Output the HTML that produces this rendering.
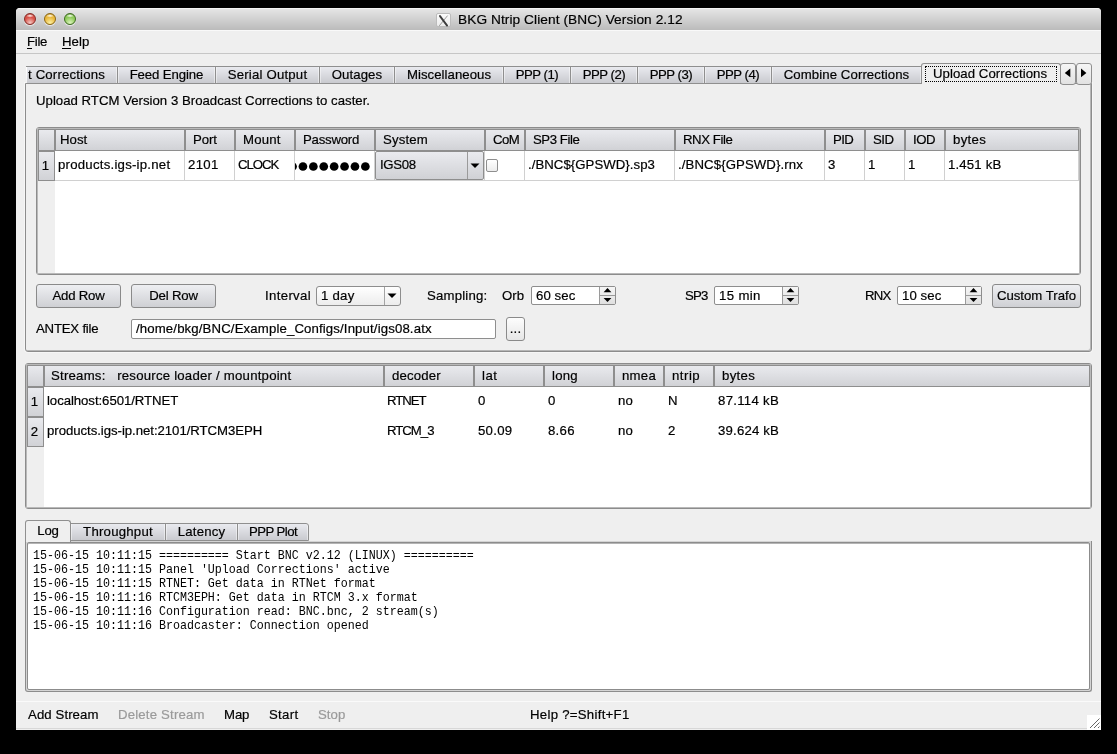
<!DOCTYPE html>
<html><head><meta charset="utf-8"><style>
html,body{margin:0;padding:0;}
body{width:1117px;height:754px;background:#000;position:relative;overflow:hidden;font-family:"Liberation Sans",sans-serif;}
.t{position:absolute;white-space:nowrap;will-change:transform;-webkit-text-stroke:0.2px currentColor;}
</style></head><body>
<div style="position:absolute;left:16px;top:8px;width:1085px;height:722px;background:#efefef;border-radius:4px 4px 0 0;"></div>
<div style="position:absolute;left:16px;top:8px;width:1085px;height:22px;background:linear-gradient(#f3f3f3 0px,#f3f3f3 1px,#e5e5e5 1px,#bbbbbb 100%);border-radius:4px 4px 0 0;"></div>
<div style="position:absolute;left:16px;top:30px;width:1085px;height:1px;background:#f9f9f9;"></div>
<div style="position:absolute;left:24px;top:12.8px;width:12px;height:12px;border-radius:50%;box-sizing:border-box;border:1px solid #862b25;background:radial-gradient(ellipse 38% 18% at 50% 18%,rgba(255,255,255,0.95),rgba(255,255,255,0) 100%),radial-gradient(circle at 50% 88%,#f3c9c3 0%,#d9544a 55%,#d9544a 75%,#862b25 100%);box-shadow:0 1px 1px rgba(255,255,255,0.7);"></div>
<div style="position:absolute;left:44px;top:12.8px;width:12px;height:12px;border-radius:50%;box-sizing:border-box;border:1px solid #8c6712;background:radial-gradient(ellipse 38% 18% at 50% 18%,rgba(255,255,255,0.95),rgba(255,255,255,0) 100%),radial-gradient(circle at 50% 88%,#fbf0a2 0%,#eab93e 55%,#eab93e 75%,#8c6712 100%);box-shadow:0 1px 1px rgba(255,255,255,0.7);"></div>
<div style="position:absolute;left:64px;top:12.8px;width:12px;height:12px;border-radius:50%;box-sizing:border-box;border:1px solid #3d6b1f;background:radial-gradient(ellipse 38% 18% at 50% 18%,rgba(255,255,255,0.95),rgba(255,255,255,0) 100%),radial-gradient(circle at 50% 88%,#dcf3bd 0%,#8fcb5c 55%,#8fcb5c 75%,#3d6b1f 100%);box-shadow:0 1px 1px rgba(255,255,255,0.7);"></div>
<div style="position:absolute;left:436px;top:12.5px;width:15px;height:14.2px;background:linear-gradient(#fbfbfb,#ececec);border:1px solid #bcbcbc;border-radius:2px;box-sizing:border-box;"></div>
<svg style="position:absolute;left:436px;top:12.5px" width="15" height="14" viewBox="0 0 15 14"><path d="M11.6 2.6 L3.2 12.9" stroke="#9c9c9c" stroke-width="1"/><path d="M4 3.1 L11.1 12.6" stroke="#3c3c3c" stroke-width="1.9" stroke-linecap="round"/></svg>
<div class="t" style="left:457.5px;top:12.25px;font-size:13.7px;line-height:16px;color:#000;font-family:'Liberation Sans', sans-serif;letter-spacing:0.07px;">BKG Ntrip Client (BNC) Version 2.12</div>
<div class="t" style="left:27px;top:34.43px;font-size:13.2px;line-height:16px;color:#000;font-family:'Liberation Sans', sans-serif;letter-spacing:-0.297px;">File</div>
<div style="position:absolute;left:27px;top:48px;width:5px;height:1px;background:#000;"></div>
<div class="t" style="left:62px;top:34.43px;font-size:13.2px;line-height:16px;color:#000;font-family:'Liberation Sans', sans-serif;letter-spacing:0.062px;">Help</div>
<div style="position:absolute;left:62px;top:48px;width:9px;height:1px;background:#000;"></div>
<div style="position:absolute;left:16px;top:53px;width:1085px;height:1px;background:#c6c6c6;"></div>
<div style="position:absolute;left:25px;top:83px;width:1067px;height:269px;border:1px solid #8c8c8c;border-radius:0 0 3px 3px;box-sizing:border-box;box-shadow:inset -1px -1px 0 #b6b6b6,0 0 0 1px rgba(255,255,255,0.45);"></div>
<div style="position:absolute;left:26px;top:66px;width:92px;height:18px;background:linear-gradient(#e9eaef,#c9cacf);border:1px solid #8f8f8f;box-sizing:border-box;box-shadow:inset 1px 0 0 rgba(255,255,255,0.45),inset -1px 0 0 rgba(255,255,255,0.45);border-left:none;"></div>
<div class="t" style="left:28px;top:67.43px;font-size:13.2px;line-height:16px;color:#000;font-family:'Liberation Sans', sans-serif;letter-spacing:0.165px;">t Corrections</div>
<div style="position:absolute;left:26px;top:67px;width:1px;height:16px;background:linear-gradient(rgba(255,255,255,0.9),rgba(255,255,255,0.5));"></div>
<div style="position:absolute;left:117px;top:66px;width:99px;height:18px;background:linear-gradient(#e9eaef,#c9cacf);border:1px solid #8f8f8f;box-sizing:border-box;box-shadow:inset 1px 0 0 rgba(255,255,255,0.45),inset -1px 0 0 rgba(255,255,255,0.45);"></div>
<div class="t" style="left:117px;top:67.43px;font-size:13.2px;line-height:16px;color:#000;font-family:'Liberation Sans', sans-serif;width:99px;text-align:center;letter-spacing:-0.104px;">Feed Engine</div>
<div style="position:absolute;left:215px;top:66px;width:105px;height:18px;background:linear-gradient(#e9eaef,#c9cacf);border:1px solid #8f8f8f;box-sizing:border-box;box-shadow:inset 1px 0 0 rgba(255,255,255,0.45),inset -1px 0 0 rgba(255,255,255,0.45);"></div>
<div class="t" style="left:215px;top:67.43px;font-size:13.2px;line-height:16px;color:#000;font-family:'Liberation Sans', sans-serif;width:105px;text-align:center;letter-spacing:0.197px;">Serial Output</div>
<div style="position:absolute;left:319px;top:66px;width:76px;height:18px;background:linear-gradient(#e9eaef,#c9cacf);border:1px solid #8f8f8f;box-sizing:border-box;box-shadow:inset 1px 0 0 rgba(255,255,255,0.45),inset -1px 0 0 rgba(255,255,255,0.45);"></div>
<div class="t" style="left:319px;top:67.43px;font-size:13.2px;line-height:16px;color:#000;font-family:'Liberation Sans', sans-serif;width:76px;text-align:center;letter-spacing:0.083px;">Outages</div>
<div style="position:absolute;left:394px;top:66px;width:110px;height:18px;background:linear-gradient(#e9eaef,#c9cacf);border:1px solid #8f8f8f;box-sizing:border-box;box-shadow:inset 1px 0 0 rgba(255,255,255,0.45),inset -1px 0 0 rgba(255,255,255,0.45);"></div>
<div class="t" style="left:394px;top:67.43px;font-size:13.2px;line-height:16px;color:#000;font-family:'Liberation Sans', sans-serif;width:110px;text-align:center;letter-spacing:0.046px;">Miscellaneous</div>
<div style="position:absolute;left:503px;top:66px;width:68px;height:18px;background:linear-gradient(#e9eaef,#c9cacf);border:1px solid #8f8f8f;box-sizing:border-box;box-shadow:inset 1px 0 0 rgba(255,255,255,0.45),inset -1px 0 0 rgba(255,255,255,0.45);"></div>
<div class="t" style="left:503px;top:67.43px;font-size:13.2px;line-height:16px;color:#000;font-family:'Liberation Sans', sans-serif;width:68px;text-align:center;letter-spacing:-0.484px;">PPP (1)</div>
<div style="position:absolute;left:570px;top:66px;width:68px;height:18px;background:linear-gradient(#e9eaef,#c9cacf);border:1px solid #8f8f8f;box-sizing:border-box;box-shadow:inset 1px 0 0 rgba(255,255,255,0.45),inset -1px 0 0 rgba(255,255,255,0.45);"></div>
<div class="t" style="left:570px;top:67.43px;font-size:13.2px;line-height:16px;color:#000;font-family:'Liberation Sans', sans-serif;width:68px;text-align:center;letter-spacing:-0.484px;">PPP (2)</div>
<div style="position:absolute;left:637px;top:66px;width:68px;height:18px;background:linear-gradient(#e9eaef,#c9cacf);border:1px solid #8f8f8f;box-sizing:border-box;box-shadow:inset 1px 0 0 rgba(255,255,255,0.45),inset -1px 0 0 rgba(255,255,255,0.45);"></div>
<div class="t" style="left:637px;top:67.43px;font-size:13.2px;line-height:16px;color:#000;font-family:'Liberation Sans', sans-serif;width:68px;text-align:center;letter-spacing:-0.484px;">PPP (3)</div>
<div style="position:absolute;left:704px;top:66px;width:68px;height:18px;background:linear-gradient(#e9eaef,#c9cacf);border:1px solid #8f8f8f;box-sizing:border-box;box-shadow:inset 1px 0 0 rgba(255,255,255,0.45),inset -1px 0 0 rgba(255,255,255,0.45);"></div>
<div class="t" style="left:704px;top:67.43px;font-size:13.2px;line-height:16px;color:#000;font-family:'Liberation Sans', sans-serif;width:68px;text-align:center;letter-spacing:-0.484px;">PPP (4)</div>
<div style="position:absolute;left:771px;top:66px;width:151px;height:18px;background:linear-gradient(#e9eaef,#c9cacf);border:1px solid #8f8f8f;box-sizing:border-box;box-shadow:inset 1px 0 0 rgba(255,255,255,0.45),inset -1px 0 0 rgba(255,255,255,0.45);"></div>
<div class="t" style="left:771px;top:67.43px;font-size:13.2px;line-height:16px;color:#000;font-family:'Liberation Sans', sans-serif;width:151px;text-align:center;letter-spacing:0.089px;">Combine Corrections</div>
<div style="position:absolute;left:921px;top:63px;width:140px;height:21px;background:#efefef;border:1px solid #8f8f8f;border-bottom:none;border-radius:3px 3px 0 0;box-sizing:border-box;"></div>
<div style="position:absolute;left:925px;top:66px;width:132px;height:16px;border:1px dotted #000;box-sizing:border-box;"></div>
<div class="t" style="left:920px;top:66.43px;font-size:13.2px;line-height:16px;color:#000;font-family:'Liberation Sans', sans-serif;width:140px;text-align:center;letter-spacing:0.076px;">Upload Corrections</div>
<div style="position:absolute;left:1060px;top:63px;width:16px;height:22px;background:linear-gradient(#f6f6f6,#e2e2e2);border:1px solid #8f8f8f;border-radius:3px;box-sizing:border-box;"></div>
<svg style="position:absolute;left:1060px;top:63px" width="16" height="22" viewBox="0 0 16 22"><path d="M10.3 5.6 L10.3 14.2 L4.8 9.9 Z" fill="#000"/></svg>
<div style="position:absolute;left:1076px;top:63px;width:16px;height:22px;background:linear-gradient(#f6f6f6,#e2e2e2);border:1px solid #8f8f8f;border-radius:3px;box-sizing:border-box;"></div>
<svg style="position:absolute;left:1076px;top:63px" width="16" height="22" viewBox="0 0 16 22"><path d="M5 5.6 L5 14.2 L10.4 9.9 Z" fill="#000"/></svg>
<div class="t" style="left:36px;top:93.43px;font-size:13.2px;line-height:16px;color:#000;font-family:'Liberation Sans', sans-serif;letter-spacing:0.014px;">Upload RTCM Version 3 Broadcast Corrections to caster.</div>
<div style="position:absolute;left:36px;top:127px;width:1045px;height:148px;border:1px solid #8c8c8c;border-radius:3px;box-sizing:border-box;"></div>
<div style="position:absolute;left:37px;top:128px;width:1043px;height:146px;border:1px solid #b9b9b9;box-sizing:border-box;background:#efefef;"></div>
<div style="position:absolute;left:55px;top:151px;width:1024px;height:122px;background:#fff;"></div>
<div style="position:absolute;left:38px;top:129px;width:17px;height:22px;background:linear-gradient(#e9eaee,#d1d2d6);border:1px solid #8e8e8e;box-sizing:border-box;"></div>
<div style="position:absolute;left:55px;top:129px;width:130px;height:22px;background:linear-gradient(#e9eaee,#d1d2d6);border:1px solid #8e8e8e;box-sizing:border-box;"></div>
<div class="t" style="left:59.5px;top:132.43px;font-size:13.2px;line-height:16px;color:#000;font-family:'Liberation Sans', sans-serif;letter-spacing:0.055px;">Host</div>
<div style="position:absolute;left:185px;top:129px;width:50px;height:22px;background:linear-gradient(#e9eaee,#d1d2d6);border:1px solid #8e8e8e;box-sizing:border-box;"></div>
<div class="t" style="left:192.6px;top:132.43px;font-size:13.2px;line-height:16px;color:#000;font-family:'Liberation Sans', sans-serif;letter-spacing:-0.094px;">Port</div>
<div style="position:absolute;left:235px;top:129px;width:60px;height:22px;background:linear-gradient(#e9eaee,#d1d2d6);border:1px solid #8e8e8e;box-sizing:border-box;"></div>
<div class="t" style="left:242.6px;top:132.43px;font-size:13.2px;line-height:16px;color:#000;font-family:'Liberation Sans', sans-serif;letter-spacing:0.200px;">Mount</div>
<div style="position:absolute;left:295px;top:129px;width:80px;height:22px;background:linear-gradient(#e9eaee,#d1d2d6);border:1px solid #8e8e8e;box-sizing:border-box;"></div>
<div class="t" style="left:302.6px;top:132.43px;font-size:13.2px;line-height:16px;color:#000;font-family:'Liberation Sans', sans-serif;letter-spacing:-0.227px;">Password</div>
<div style="position:absolute;left:375px;top:129px;width:110px;height:22px;background:linear-gradient(#e9eaee,#d1d2d6);border:1px solid #8e8e8e;box-sizing:border-box;"></div>
<div class="t" style="left:382.6px;top:132.43px;font-size:13.2px;line-height:16px;color:#000;font-family:'Liberation Sans', sans-serif;letter-spacing:0.135px;">System</div>
<div style="position:absolute;left:485px;top:129px;width:40px;height:22px;background:linear-gradient(#e9eaee,#d1d2d6);border:1px solid #8e8e8e;box-sizing:border-box;"></div>
<div class="t" style="left:492.6px;top:132.43px;font-size:13.2px;line-height:16px;color:#000;font-family:'Liberation Sans', sans-serif;letter-spacing:-0.589px;">CoM</div>
<div style="position:absolute;left:525px;top:129px;width:150px;height:22px;background:linear-gradient(#e9eaee,#d1d2d6);border:1px solid #8e8e8e;box-sizing:border-box;"></div>
<div class="t" style="left:532.6px;top:132.43px;font-size:13.2px;line-height:16px;color:#000;font-family:'Liberation Sans', sans-serif;letter-spacing:-0.432px;">SP3 File</div>
<div style="position:absolute;left:675px;top:129px;width:150px;height:22px;background:linear-gradient(#e9eaee,#d1d2d6);border:1px solid #8e8e8e;box-sizing:border-box;"></div>
<div class="t" style="left:682.6px;top:132.43px;font-size:13.2px;line-height:16px;color:#000;font-family:'Liberation Sans', sans-serif;letter-spacing:-0.418px;">RNX File</div>
<div style="position:absolute;left:825px;top:129px;width:40px;height:22px;background:linear-gradient(#e9eaee,#d1d2d6);border:1px solid #8e8e8e;box-sizing:border-box;"></div>
<div class="t" style="left:832.6px;top:132.43px;font-size:13.2px;line-height:16px;color:#000;font-family:'Liberation Sans', sans-serif;letter-spacing:-0.656px;">PID</div>
<div style="position:absolute;left:865px;top:129px;width:40px;height:22px;background:linear-gradient(#e9eaee,#d1d2d6);border:1px solid #8e8e8e;box-sizing:border-box;"></div>
<div class="t" style="left:872.6px;top:132.43px;font-size:13.2px;line-height:16px;color:#000;font-family:'Liberation Sans', sans-serif;letter-spacing:-0.526px;">SID</div>
<div style="position:absolute;left:905px;top:129px;width:40px;height:22px;background:linear-gradient(#e9eaee,#d1d2d6);border:1px solid #8e8e8e;box-sizing:border-box;"></div>
<div class="t" style="left:912.6px;top:132.43px;font-size:13.2px;line-height:16px;color:#000;font-family:'Liberation Sans', sans-serif;letter-spacing:-0.401px;">IOD</div>
<div style="position:absolute;left:945px;top:129px;width:134px;height:22px;background:linear-gradient(#e9eaee,#d1d2d6);border:1px solid #8e8e8e;box-sizing:border-box;"></div>
<div class="t" style="left:952.6px;top:132.43px;font-size:13.2px;line-height:16px;color:#000;font-family:'Liberation Sans', sans-serif;letter-spacing:0.316px;">bytes</div>
<div style="position:absolute;left:38px;top:151px;width:17px;height:30px;background:linear-gradient(#e9eaee,#d1d2d6);border:1px solid #8e8e8e;box-sizing:border-box;"></div>
<div class="t" style="left:37.3px;top:158.43px;font-size:13.2px;line-height:16px;color:#000;font-family:'Liberation Sans', sans-serif;width:17px;text-align:center;">1</div>
<div style="position:absolute;left:184px;top:151px;width:1px;height:30px;background:#d0d0d0;"></div>
<div style="position:absolute;left:234px;top:151px;width:1px;height:30px;background:#d0d0d0;"></div>
<div style="position:absolute;left:294px;top:151px;width:1px;height:30px;background:#d0d0d0;"></div>
<div style="position:absolute;left:374px;top:151px;width:1px;height:30px;background:#d0d0d0;"></div>
<div style="position:absolute;left:484px;top:151px;width:1px;height:30px;background:#d0d0d0;"></div>
<div style="position:absolute;left:524px;top:151px;width:1px;height:30px;background:#d0d0d0;"></div>
<div style="position:absolute;left:674px;top:151px;width:1px;height:30px;background:#d0d0d0;"></div>
<div style="position:absolute;left:824px;top:151px;width:1px;height:30px;background:#d0d0d0;"></div>
<div style="position:absolute;left:864px;top:151px;width:1px;height:30px;background:#d0d0d0;"></div>
<div style="position:absolute;left:904px;top:151px;width:1px;height:30px;background:#d0d0d0;"></div>
<div style="position:absolute;left:944px;top:151px;width:1px;height:30px;background:#d0d0d0;"></div>
<div style="position:absolute;left:1078px;top:151px;width:1px;height:30px;background:#d0d0d0;"></div>
<div style="position:absolute;left:55px;top:180px;width:1024px;height:1px;background:#d0d0d0;"></div>
<div class="t" style="left:58px;top:157.43px;font-size:13.2px;line-height:16px;color:#000;font-family:'Liberation Sans', sans-serif;letter-spacing:0.239px;">products.igs-ip.net</div>
<div class="t" style="left:188px;top:157.43px;font-size:13.2px;line-height:16px;color:#000;font-family:'Liberation Sans', sans-serif;letter-spacing:0.312px;">2101</div>
<div class="t" style="left:237.5px;top:157.43px;font-size:13.2px;line-height:16px;color:#000;font-family:'Liberation Sans', sans-serif;letter-spacing:-1.019px;">CLOCK</div>
<svg style="position:absolute;left:295px;top:160px" width="79" height="13" viewBox="0 0 79 13"><circle cx="70.35" cy="6.5" r="4.35" fill="#000"/><circle cx="59.95" cy="6.5" r="4.35" fill="#000"/><circle cx="49.55" cy="6.5" r="4.35" fill="#000"/><circle cx="39.15" cy="6.5" r="4.35" fill="#000"/><circle cx="28.75" cy="6.5" r="4.35" fill="#000"/><circle cx="18.35" cy="6.5" r="4.35" fill="#000"/><circle cx="7.95" cy="6.5" r="4.35" fill="#000"/><circle cx="-2.45" cy="6.5" r="4.35" fill="#000"/></svg>
<div style="position:absolute;left:375px;top:151px;width:109px;height:29px;background:linear-gradient(#eaebef,#d0d1d5);border:1px solid #8e8e8e;border-radius:2px;box-sizing:border-box;"></div>
<div style="position:absolute;left:467px;top:152px;width:1px;height:27px;background:#9a9a9a;"></div>
<svg style="position:absolute;left:469px;top:161px" width="12" height="8" viewBox="0 0 12 8"><path d="M1.5 2.5 L10.5 2.5 L6 7 Z" fill="#000"/></svg>
<div class="t" style="left:380px;top:157.43px;font-size:13.2px;line-height:16px;color:#000;font-family:'Liberation Sans', sans-serif;letter-spacing:-0.322px;">IGS08</div>
<div style="position:absolute;left:486px;top:159px;width:12px;height:13px;background:linear-gradient(#ffffff,#ececec);border:1px solid #8e8e8e;border-radius:2px;box-sizing:border-box;"></div>
<div class="t" style="left:528px;top:157.43px;font-size:13.2px;line-height:16px;color:#000;font-family:'Liberation Sans', sans-serif;letter-spacing:0.053px;">./BNC${GPSWD}.sp3</div>
<div class="t" style="left:678px;top:157.43px;font-size:13.2px;line-height:16px;color:#000;font-family:'Liberation Sans', sans-serif;letter-spacing:0.105px;">./BNC${GPSWD}.rnx</div>
<div class="t" style="left:828px;top:157.43px;font-size:13.2px;line-height:16px;color:#000;font-family:'Liberation Sans', sans-serif;">3</div>
<div class="t" style="left:868px;top:157.43px;font-size:13.2px;line-height:16px;color:#000;font-family:'Liberation Sans', sans-serif;">1</div>
<div class="t" style="left:908px;top:157.43px;font-size:13.2px;line-height:16px;color:#000;font-family:'Liberation Sans', sans-serif;">1</div>
<div class="t" style="left:948px;top:157.43px;font-size:13.2px;line-height:16px;color:#000;font-family:'Liberation Sans', sans-serif;letter-spacing:0.170px;">1.451 kB</div>
<div style="position:absolute;left:36px;top:284px;width:85px;height:24px;background:linear-gradient(#eeeff2,#cfd0d4);border:1px solid #8a8a8a;border-radius:3px;box-sizing:border-box;"></div>
<div class="t" style="left:36px;top:288.43px;font-size:13.2px;line-height:16px;color:#000;font-family:'Liberation Sans', sans-serif;width:85px;text-align:center;letter-spacing:-0.210px;">Add Row</div>
<div style="position:absolute;left:131px;top:284px;width:85px;height:24px;background:linear-gradient(#eeeff2,#cfd0d4);border:1px solid #8a8a8a;border-radius:3px;box-sizing:border-box;"></div>
<div class="t" style="left:131px;top:288.43px;font-size:13.2px;line-height:16px;color:#000;font-family:'Liberation Sans', sans-serif;width:85px;text-align:center;letter-spacing:-0.158px;">Del Row</div>
<div class="t" style="left:265px;top:288.43px;font-size:13.2px;line-height:16px;color:#000;font-family:'Liberation Sans', sans-serif;letter-spacing:0.346px;">Interval</div>
<div style="position:absolute;left:316px;top:286px;width:85px;height:20px;background:linear-gradient(#ffffff,#ececec);border:1px solid #8e8e8e;border-radius:3px;box-sizing:border-box;"></div>
<div style="position:absolute;left:384px;top:287px;width:1px;height:18px;background:#a4a4a4;"></div>
<svg style="position:absolute;left:386px;top:291px" width="12" height="8" viewBox="0 0 12 8"><path d="M1.5 2.5 L10.5 2.5 L6 7 Z" fill="#000"/></svg>
<div class="t" style="left:321px;top:288.43px;font-size:13.2px;line-height:16px;color:#000;font-family:'Liberation Sans', sans-serif;letter-spacing:0.263px;">1 day</div>
<div class="t" style="left:427px;top:288.43px;font-size:13.2px;line-height:16px;color:#000;font-family:'Liberation Sans', sans-serif;letter-spacing:0.179px;">Sampling:</div>
<div class="t" style="left:502px;top:288.43px;font-size:13.2px;line-height:16px;color:#000;font-family:'Liberation Sans', sans-serif;letter-spacing:0.016px;">Orb</div>
<div style="position:absolute;left:531px;top:286px;width:85px;height:19px;background:#fff;border:1px solid #8e8e8e;border-radius:2px;box-sizing:border-box;"></div>
<div style="position:absolute;left:599px;top:287px;width:16px;height:17px;background:linear-gradient(#f6f6f6,#e0e0e0);border-left:1px solid #9a9a9a;box-sizing:border-box;"></div>
<div style="position:absolute;left:600px;top:295px;width:15px;height:1px;background:#9a9a9a;"></div>
<svg style="position:absolute;left:600px;top:287px" width="15" height="17" viewBox="0 0 15 17"><path d="M3.6 5.2 L11.4 5.2 L7.5 1 Z" fill="#000"/><path d="M3.6 10.9 L11.4 10.9 L7.5 15 Z" fill="#000"/></svg>
<div class="t" style="left:536px;top:288.43px;font-size:13.2px;line-height:16px;color:#000;font-family:'Liberation Sans', sans-serif;letter-spacing:0.083px;">60 sec</div>
<div class="t" style="left:685px;top:288.43px;font-size:13.2px;line-height:16px;color:#000;font-family:'Liberation Sans', sans-serif;letter-spacing:-0.807px;">SP3</div>
<div style="position:absolute;left:714px;top:286px;width:85px;height:19px;background:#fff;border:1px solid #8e8e8e;border-radius:2px;box-sizing:border-box;"></div>
<div style="position:absolute;left:782px;top:287px;width:16px;height:17px;background:linear-gradient(#f6f6f6,#e0e0e0);border-left:1px solid #9a9a9a;box-sizing:border-box;"></div>
<div style="position:absolute;left:783px;top:295px;width:15px;height:1px;background:#9a9a9a;"></div>
<svg style="position:absolute;left:783px;top:287px" width="15" height="17" viewBox="0 0 15 17"><path d="M3.6 5.2 L11.4 5.2 L7.5 1 Z" fill="#000"/><path d="M3.6 10.9 L11.4 10.9 L7.5 15 Z" fill="#000"/></svg>
<div class="t" style="left:719px;top:288.43px;font-size:13.2px;line-height:16px;color:#000;font-family:'Liberation Sans', sans-serif;letter-spacing:0.359px;">15 min</div>
<div class="t" style="left:865px;top:288.43px;font-size:13.2px;line-height:16px;color:#000;font-family:'Liberation Sans', sans-serif;letter-spacing:-0.771px;">RNX</div>
<div style="position:absolute;left:897px;top:286px;width:85px;height:19px;background:#fff;border:1px solid #8e8e8e;border-radius:2px;box-sizing:border-box;"></div>
<div style="position:absolute;left:965px;top:287px;width:16px;height:17px;background:linear-gradient(#f6f6f6,#e0e0e0);border-left:1px solid #9a9a9a;box-sizing:border-box;"></div>
<div style="position:absolute;left:966px;top:295px;width:15px;height:1px;background:#9a9a9a;"></div>
<svg style="position:absolute;left:966px;top:287px" width="15" height="17" viewBox="0 0 15 17"><path d="M3.6 5.2 L11.4 5.2 L7.5 1 Z" fill="#000"/><path d="M3.6 10.9 L11.4 10.9 L7.5 15 Z" fill="#000"/></svg>
<div class="t" style="left:902px;top:288.43px;font-size:13.2px;line-height:16px;color:#000;font-family:'Liberation Sans', sans-serif;letter-spacing:0.083px;">10 sec</div>
<div style="position:absolute;left:992px;top:284px;width:89px;height:24px;background:linear-gradient(#eeeff2,#cfd0d4);border:1px solid #8a8a8a;border-radius:3px;box-sizing:border-box;"></div>
<div class="t" style="left:992px;top:288.43px;font-size:13.2px;line-height:16px;color:#000;font-family:'Liberation Sans', sans-serif;width:89px;text-align:center;letter-spacing:0.007px;">Custom Trafo</div>
<div class="t" style="left:36px;top:321.43px;font-size:13.2px;line-height:16px;color:#000;font-family:'Liberation Sans', sans-serif;letter-spacing:-0.209px;">ANTEX file</div>
<div style="position:absolute;left:131px;top:319px;width:365px;height:20px;background:#fff;border:1px solid #8e8e8e;border-radius:2px;box-sizing:border-box;"></div>
<div class="t" style="left:136px;top:321.43px;font-size:13.2px;line-height:16px;color:#000;font-family:'Liberation Sans', sans-serif;letter-spacing:0.136px;">/home/bkg/BNC/Example_Configs/Input/igs08.atx</div>
<div style="position:absolute;left:506px;top:317px;width:19px;height:24px;background:linear-gradient(#fdfdfd,#e6e6e6);border:1px solid #8a8a8a;border-radius:3px;box-sizing:border-box;"></div>
<div class="t" style="left:506px;top:321.43px;font-size:13.2px;line-height:16px;color:#000;font-family:'Liberation Sans', sans-serif;width:19px;text-align:center;letter-spacing:0.156px;">...</div>
<div style="position:absolute;left:25px;top:363px;width:1067px;height:146px;border:1px solid #8c8c8c;border-radius:3px;box-sizing:border-box;"></div>
<div style="position:absolute;left:26px;top:364px;width:1065px;height:144px;border:1px solid #b9b9b9;box-sizing:border-box;background:#efefef;"></div>
<div style="position:absolute;left:44px;top:386px;width:1046px;height:121px;background:#fff;"></div>
<div style="position:absolute;left:27px;top:365px;width:17px;height:22px;background:linear-gradient(#e9eaee,#d1d2d6);border:1px solid #8e8e8e;box-sizing:border-box;"></div>
<div style="position:absolute;left:44px;top:365px;width:340px;height:22px;background:linear-gradient(#e9eaee,#d1d2d6);border:1px solid #8e8e8e;box-sizing:border-box;"></div>
<div class="t" style="left:51.3px;top:368.43px;font-size:13.2px;line-height:16px;color:#000;font-family:'Liberation Sans', sans-serif;letter-spacing:0.222px;">Streams:&nbsp;&nbsp;&nbsp;resource loader / mountpoint</div>
<div style="position:absolute;left:384px;top:365px;width:90px;height:22px;background:linear-gradient(#e9eaee,#d1d2d6);border:1px solid #8e8e8e;box-sizing:border-box;"></div>
<div class="t" style="left:391.6px;top:368.43px;font-size:13.2px;line-height:16px;color:#000;font-family:'Liberation Sans', sans-serif;letter-spacing:0.183px;">decoder</div>
<div style="position:absolute;left:474px;top:365px;width:70px;height:22px;background:linear-gradient(#e9eaee,#d1d2d6);border:1px solid #8e8e8e;box-sizing:border-box;"></div>
<div class="t" style="left:481.6px;top:368.43px;font-size:13.2px;line-height:16px;color:#000;font-family:'Liberation Sans', sans-serif;letter-spacing:0.490px;">lat</div>
<div style="position:absolute;left:544px;top:365px;width:70px;height:22px;background:linear-gradient(#e9eaee,#d1d2d6);border:1px solid #8e8e8e;box-sizing:border-box;"></div>
<div class="t" style="left:551.6px;top:368.43px;font-size:13.2px;line-height:16px;color:#000;font-family:'Liberation Sans', sans-serif;letter-spacing:0.246px;">long</div>
<div style="position:absolute;left:614px;top:365px;width:50px;height:22px;background:linear-gradient(#e9eaee,#d1d2d6);border:1px solid #8e8e8e;box-sizing:border-box;"></div>
<div class="t" style="left:621.6px;top:368.43px;font-size:13.2px;line-height:16px;color:#000;font-family:'Liberation Sans', sans-serif;letter-spacing:0.270px;">nmea</div>
<div style="position:absolute;left:664px;top:365px;width:50px;height:22px;background:linear-gradient(#e9eaee,#d1d2d6);border:1px solid #8e8e8e;box-sizing:border-box;"></div>
<div class="t" style="left:671.6px;top:368.43px;font-size:13.2px;line-height:16px;color:#000;font-family:'Liberation Sans', sans-serif;letter-spacing:0.512px;">ntrip</div>
<div style="position:absolute;left:714px;top:365px;width:376px;height:22px;background:linear-gradient(#e9eaee,#d1d2d6);border:1px solid #8e8e8e;box-sizing:border-box;"></div>
<div class="t" style="left:721.6px;top:368.43px;font-size:13.2px;line-height:16px;color:#000;font-family:'Liberation Sans', sans-serif;letter-spacing:0.316px;">bytes</div>
<div style="position:absolute;left:27px;top:387px;width:17px;height:30px;background:linear-gradient(#e9eaee,#d1d2d6);border:1px solid #8e8e8e;box-sizing:border-box;"></div>
<div class="t" style="left:25.7px;top:394.43px;font-size:13.2px;line-height:16px;color:#000;font-family:'Liberation Sans', sans-serif;width:17px;text-align:center;">1</div>
<div style="position:absolute;left:27px;top:417px;width:17px;height:30px;background:linear-gradient(#e9eaee,#d1d2d6);border:1px solid #8e8e8e;box-sizing:border-box;"></div>
<div class="t" style="left:25.7px;top:424.43px;font-size:13.2px;line-height:16px;color:#000;font-family:'Liberation Sans', sans-serif;width:17px;text-align:center;">2</div>
<div class="t" style="left:47px;top:393.43px;font-size:13.2px;line-height:16px;color:#000;font-family:'Liberation Sans', sans-serif;letter-spacing:-0.060px;">localhost:6501/RTNET</div>
<div class="t" style="left:387px;top:393.43px;font-size:13.2px;line-height:16px;color:#000;font-family:'Liberation Sans', sans-serif;letter-spacing:-1.012px;">RTNET</div>
<div class="t" style="left:478px;top:393.43px;font-size:13.2px;line-height:16px;color:#000;font-family:'Liberation Sans', sans-serif;">0</div>
<div class="t" style="left:548px;top:393.43px;font-size:13.2px;line-height:16px;color:#000;font-family:'Liberation Sans', sans-serif;">0</div>
<div class="t" style="left:618px;top:393.43px;font-size:13.2px;line-height:16px;color:#000;font-family:'Liberation Sans', sans-serif;letter-spacing:0.148px;">no</div>
<div class="t" style="left:668px;top:393.43px;font-size:13.2px;line-height:16px;color:#000;font-family:'Liberation Sans', sans-serif;">N</div>
<div class="t" style="left:718px;top:393.43px;font-size:13.2px;line-height:16px;color:#000;font-family:'Liberation Sans', sans-serif;letter-spacing:0.295px;">87.114 kB</div>
<div class="t" style="left:47px;top:423.43px;font-size:13.2px;line-height:16px;color:#000;font-family:'Liberation Sans', sans-serif;letter-spacing:-0.044px;">products.igs-ip.net:2101/RTCM3EPH</div>
<div class="t" style="left:387px;top:423.43px;font-size:13.2px;line-height:16px;color:#000;font-family:'Liberation Sans', sans-serif;letter-spacing:-1.010px;">RTCM_3</div>
<div class="t" style="left:478px;top:423.43px;font-size:13.2px;line-height:16px;color:#000;font-family:'Liberation Sans', sans-serif;letter-spacing:0.281px;">50.09</div>
<div class="t" style="left:548px;top:423.43px;font-size:13.2px;line-height:16px;color:#000;font-family:'Liberation Sans', sans-serif;letter-spacing:0.273px;">8.66</div>
<div class="t" style="left:618px;top:423.43px;font-size:13.2px;line-height:16px;color:#000;font-family:'Liberation Sans', sans-serif;letter-spacing:0.148px;">no</div>
<div class="t" style="left:668px;top:423.43px;font-size:13.2px;line-height:16px;color:#000;font-family:'Liberation Sans', sans-serif;">2</div>
<div class="t" style="left:718px;top:423.43px;font-size:13.2px;line-height:16px;color:#000;font-family:'Liberation Sans', sans-serif;letter-spacing:0.186px;">39.624 kB</div>
<div style="position:absolute;left:25px;top:541px;width:1067px;height:151px;border:1px solid #8c8c8c;border-top:none;border-radius:0 0 3px 3px;box-sizing:border-box;background:#d4d4d4;"></div>
<div style="position:absolute;left:27px;top:542px;width:1063px;height:148px;border:1px solid #8c8c8c;border-radius:2px;box-sizing:border-box;background:#fff;box-shadow:inset 0 1px 0 #b4b4b4;"></div>
<div style="position:absolute;left:70px;top:523px;width:96px;height:18px;background:linear-gradient(#e9eaef,#c9cacf);border:1px solid #8f8f8f;box-sizing:border-box;box-shadow:inset 1px 0 0 rgba(255,255,255,0.45),inset -1px 0 0 rgba(255,255,255,0.45);"></div>
<div class="t" style="left:70px;top:524.43px;font-size:13.2px;line-height:16px;color:#000;font-family:'Liberation Sans', sans-serif;width:96px;text-align:center;letter-spacing:0.233px;">Throughput</div>
<div style="position:absolute;left:165px;top:523px;width:73px;height:18px;background:linear-gradient(#e9eaef,#c9cacf);border:1px solid #8f8f8f;box-sizing:border-box;box-shadow:inset 1px 0 0 rgba(255,255,255,0.45),inset -1px 0 0 rgba(255,255,255,0.45);"></div>
<div class="t" style="left:165px;top:524.43px;font-size:13.2px;line-height:16px;color:#000;font-family:'Liberation Sans', sans-serif;width:73px;text-align:center;letter-spacing:0.185px;">Latency</div>
<div style="position:absolute;left:237px;top:523px;width:72px;height:18px;background:linear-gradient(#e9eaef,#c9cacf);border:1px solid #8f8f8f;box-sizing:border-box;box-shadow:inset 1px 0 0 rgba(255,255,255,0.45),inset -1px 0 0 rgba(255,255,255,0.45);border-top-right-radius:3px;"></div>
<div class="t" style="left:237px;top:524.43px;font-size:13.2px;line-height:16px;color:#000;font-family:'Liberation Sans', sans-serif;width:72px;text-align:center;letter-spacing:-0.551px;">PPP Plot</div>
<div style="position:absolute;left:25px;top:520px;width:46px;height:22px;background:#efefef;border:1px solid #8f8f8f;border-bottom:none;border-radius:3px 3px 0 0;box-sizing:border-box;"></div>
<div class="t" style="left:25px;top:523.43px;font-size:13.2px;line-height:16px;color:#000;font-family:'Liberation Sans', sans-serif;width:46px;text-align:center;letter-spacing:-0.177px;">Log</div>
<div class="t" style="left:33px;top:548.39px;font-size:11.67px;line-height:16px;color:#000;font-family:'Liberation Mono', monospace;transform:scaleY(1.13);transform-origin:0 11.11px;-webkit-text-stroke:0;">15-06-15 10:11:15 ========== Start BNC v2.12 (LINUX) ==========</div>
<div class="t" style="left:33px;top:562.39px;font-size:11.67px;line-height:16px;color:#000;font-family:'Liberation Mono', monospace;transform:scaleY(1.13);transform-origin:0 11.11px;-webkit-text-stroke:0;">15-06-15 10:11:15 Panel &#39;Upload Corrections&#39; active</div>
<div class="t" style="left:33px;top:576.39px;font-size:11.67px;line-height:16px;color:#000;font-family:'Liberation Mono', monospace;transform:scaleY(1.13);transform-origin:0 11.11px;-webkit-text-stroke:0;">15-06-15 10:11:15 RTNET: Get data in RTNet format</div>
<div class="t" style="left:33px;top:590.39px;font-size:11.67px;line-height:16px;color:#000;font-family:'Liberation Mono', monospace;transform:scaleY(1.13);transform-origin:0 11.11px;-webkit-text-stroke:0;">15-06-15 10:11:16 RTCM3EPH: Get data in RTCM 3.x format</div>
<div class="t" style="left:33px;top:604.39px;font-size:11.67px;line-height:16px;color:#000;font-family:'Liberation Mono', monospace;transform:scaleY(1.13);transform-origin:0 11.11px;-webkit-text-stroke:0;">15-06-15 10:11:16 Configuration read: BNC.bnc, 2 stream(s)</div>
<div class="t" style="left:33px;top:618.39px;font-size:11.67px;line-height:16px;color:#000;font-family:'Liberation Mono', monospace;transform:scaleY(1.13);transform-origin:0 11.11px;-webkit-text-stroke:0;">15-06-15 10:11:16 Broadcaster: Connection opened</div>
<div style="position:absolute;left:16px;top:701px;width:1085px;height:1px;background:#fafafa;"></div>
<div style="position:absolute;left:16px;top:728px;width:1085px;height:1px;background:#d8d8d8;"></div>
<div class="t" style="left:28px;top:707.43px;font-size:13.2px;line-height:16px;color:#000;font-family:'Liberation Sans', sans-serif;letter-spacing:0.091px;">Add Stream</div>
<div class="t" style="left:118px;top:707.43px;font-size:13.2px;line-height:16px;color:#9a9a9a;font-family:'Liberation Sans', sans-serif;letter-spacing:0.188px;">Delete Stream</div>
<div class="t" style="left:224px;top:707.43px;font-size:13.2px;line-height:16px;color:#000;font-family:'Liberation Sans', sans-serif;letter-spacing:-0.099px;">Map</div>
<div class="t" style="left:269px;top:707.43px;font-size:13.2px;line-height:16px;color:#000;font-family:'Liberation Sans', sans-serif;letter-spacing:0.300px;">Start</div>
<div class="t" style="left:318px;top:707.43px;font-size:13.2px;line-height:16px;color:#9a9a9a;font-family:'Liberation Sans', sans-serif;letter-spacing:0.047px;">Stop</div>
<div class="t" style="left:530px;top:707.43px;font-size:13.2px;line-height:16px;color:#000;font-family:'Liberation Sans', sans-serif;letter-spacing:0.282px;">Help ?=Shift+F1</div>
<div style="position:absolute;left:1087px;top:715px;width:14px;height:15px;background:#fff;"></div>
<svg style="position:absolute;left:1087px;top:715px" width="14" height="15" viewBox="0 0 14 15"><path d="M3 13 L12.5 3.5 M7 13 L12.5 7.5 M11 13 L12.5 11.5" stroke="#666" stroke-width="1"/></svg>
</body></html>
